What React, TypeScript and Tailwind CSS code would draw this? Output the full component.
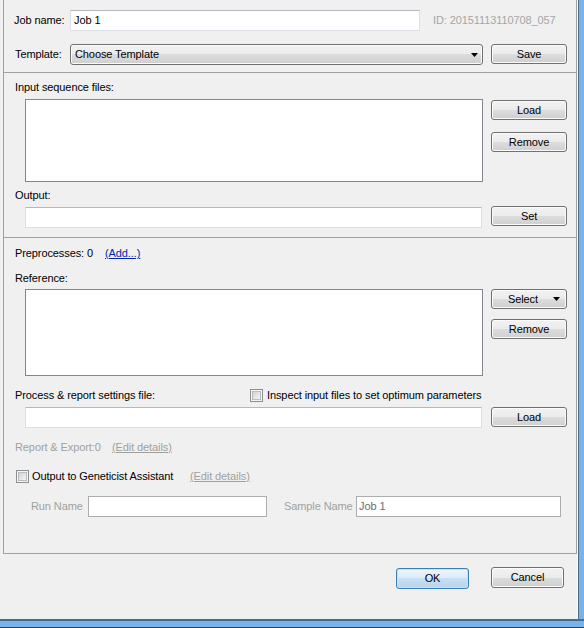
import React from 'react';

const btnBase =
  'flex items-center rounded-[3px] border border-[#707070] bg-[linear-gradient(to_bottom,#f2f2f2_0%,#ebebeb_50%,#dddddd_50%,#cfcfcf_100%)] shadow-[inset_0_0_0_1px_#fbfbfb] text-black';
const btn = `${btnBase} justify-center`;
const textBox = 'h-[21px] border border-[#dbdfe6] border-t-[#b5b8bf] bg-white';
const listBox = 'border border-[#828790] bg-white';

function Button({ label, className = '' }: { label: string; className?: string }) {
  return <div className={`${btn} w-[76px] h-[20px] ${className}`}>{label}</div>;
}

function Checkbox() {
  return (
    <div className="w-[13px] h-[13px] border border-[#8e8f8f] bg-[#f4f4f4] p-[1px] shrink-0">
      <div className="w-full h-full border border-[#b9bcc1] bg-[linear-gradient(135deg,#cfd1d4,#f6f6f6)]" />
    </div>
  );
}

function Arrow() {
  return (
    <svg width="7" height="4" viewBox="0 0 7 4" className="shrink-0">
      <path d="M0 0h7L3.5 4z" fill="#000" />
    </svg>
  );
}

export default function App() {
  return (
    <div
      className="w-[584px] h-[628px] flex flex-col bg-[#f0f0f0] text-[11px] leading-[13px] tracking-[-0.1px] text-black overflow-hidden"
      style={{ fontFamily: '"Liberation Sans", Arial, sans-serif' }}
    >
      <div className="flex h-[619px]">
        <div className="w-[578px] flex flex-col border-r border-[#fafafa]">
          {/* main panel */}
          <div className="ml-[3px] w-[574px] h-[554px] border-l border-r border-b border-[#a0a0a0] flex flex-col">
            {/* job + template */}
            <div className="h-[73px] border-b border-[#a0a0a0] shrink-0">
              <div className="flex items-center mt-[10px] h-[21px]">
                <span className="ml-[10px] w-[56px]">Job name:</span>
                <div className={`${textBox} w-[350px] flex items-center pl-[3px]`}>Job 1</div>
                <span className="ml-[13px] text-[#a6a6a6]">ID: 20151113110708_057</span>
              </div>
              <div className="flex items-start mt-[13px]">
                <span className="ml-[11px] w-[55px] mt-[4px]">Template:</span>
                <div className={`${btnBase} justify-between w-[413px] h-[21px] pl-[4px] pr-[4px]`}>
                  <span>Choose Template</span>
                  <Arrow />
                </div>
                <Button label="Save" className="ml-[8px]" />
              </div>
            </div>

            {/* input sequence files + output */}
            <div className="h-[165px] border-b border-[#a0a0a0] shrink-0">
              <div className="ml-[11px] mt-[8px]">Input sequence files:</div>
              <div className="flex items-start mt-[5px]">
                <div className={`${listBox} ml-[21px] w-[458px] h-[83px]`} />
                <div className="ml-[8px] flex flex-col">
                  <Button label="Load" className="mt-[1px]" />
                  <Button label="Remove" className="mt-[12px]" />
                </div>
              </div>
              <div className="ml-[11px] mt-[7px]">Output:</div>
              <div className="flex items-start mt-[4px]">
                <div className={`${textBox} ml-[21px] mt-[1px] w-[457px]`} />
                <Button label="Set" className="ml-[9px]" />
              </div>
            </div>

            {/* preprocesses, reference, settings */}
            <div className="flex-1">
              <div className="flex mt-[9px] ml-[11px]">
                <span className="w-[90px]">Preprocesses: 0</span>
                <span className="text-[#0026b0] underline">(Add...)</span>
              </div>
              <div className="ml-[11px] mt-[12px]">Reference:</div>
              <div className="flex items-start mt-[4px]">
                <div className={`${listBox} ml-[21px] w-[458px] h-[87px]`} />
                <div className="ml-[8px] flex flex-col">
                  <div className={`${btnBase} justify-between w-[76px] h-[20px] pl-[16px] pr-[6px]`}>
                    <span>Select</span>
                    <Arrow />
                  </div>
                  <Button label="Remove" className="mt-[10px]" />
                </div>
              </div>
              <div className="flex items-center mt-[13px] h-[13px]">
                <span className="ml-[11px] w-[235px]">Process &amp; report settings file:</span>
                <Checkbox />
                <span className="ml-[4px]">Inspect input files to set optimum parameters</span>
              </div>
              <div className="flex items-start mt-[5px]">
                <div className={`${textBox} ml-[21px] w-[457px]`} />
                <Button label="Load" className="ml-[9px]" />
              </div>
              <div className="flex mt-[13px] ml-[11px] text-[#a0a0a0]">
                <span className="w-[97px]">Report &amp; Export:0</span>
                <span className="underline">(Edit details)</span>
              </div>
              <div className="flex items-center mt-[16px] h-[13px]">
                <div className="ml-[12px] w-[174px] flex items-center">
                  <Checkbox />
                  <span className="ml-[3px]">Output to Geneticist Assistant</span>
                </div>
                <span className="underline text-[#a0a0a0]">(Edit details)</span>
              </div>
              <div className="flex items-center mt-[13px] text-[#a0a0a0]">
                <span className="ml-[27px] w-[57px]">Run Name</span>
                <div className="h-[21px] w-[179px] border border-[#adadad] bg-white" />
                <span className="ml-[17px] w-[72px]">Sample Name</span>
                <div className="h-[21px] w-[205px] border border-[#adadad] bg-white flex items-center pl-[2px] text-[#6d6d6d]">
                  Job 1
                </div>
              </div>
            </div>
          </div>

          {/* footer */}
          <div className="flex-1 flex justify-end items-start pt-[13px] pr-[13px] gap-[22px]">
            <div className="mt-[1px] w-[73px] h-[21px] flex items-center justify-center rounded-[3px] border border-[#3c7fb1] bg-[linear-gradient(to_bottom,#ecf5fc_0%,#dcecf9_50%,#c8e0f3_50%,#b6d5ee_100%)] shadow-[inset_0_0_0_1px_#bfe7fa]">
              OK
            </div>
            <div className={`${btn} w-[73px] h-[21px]`}>Cancel</div>
          </div>
        </div>
        <div className="flex-1 border-l border-[#4a6a8c] bg-[#79b3ea]" />
      </div>
      <div className="h-[9px] border-t-2 border-t-[#4a6a8c] border-b border-b-[#2c3e52] bg-[#79b3ea]" />
    </div>
  );
}
